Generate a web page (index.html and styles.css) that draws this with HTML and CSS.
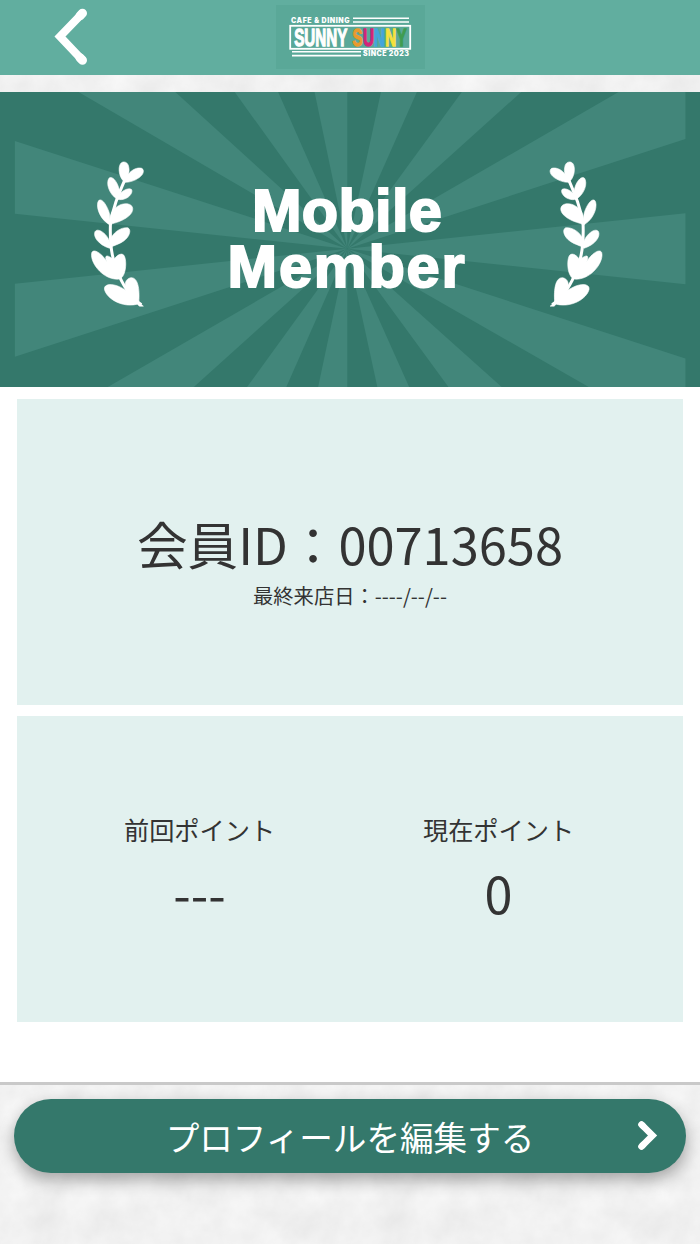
FILE: index.html
```
<!DOCTYPE html>
<html lang="ja">
<head>
  <meta charset="UTF-8">
  <meta name="viewport" content="width=device-width, initial-scale=1.0">
  <title>会員証 - SUNNY SUNNY</title>
  <link rel="stylesheet" href="styles.css">
</head>
<body>
  <header class="header">
    <a href="#" class="back-button" aria-label="戻る">
      <svg width="34" height="58" viewBox="0 0 34 58">
        <path d="M28.7 5 L6 28.5 L28.7 52.5" fill="none" stroke="#fff" stroke-width="8" stroke-linejoin="miter"/>
        <path d="M28.5 5.2 L26 7.8 M28.5 52.2 L26 49.7" stroke="#fff" stroke-width="9" stroke-linecap="round"/>
      </svg>
    </a>
    <svg class="logo" width="149" height="64" viewBox="0 0 149 64">
      <rect width="149" height="64" fill="#5aa898"/>
      <g fill="#fff" class="logo-small">
        <text x="15" y="17.6" textLength="58.5">CAFE &amp; DINING</text>
        <text x="87" y="51" textLength="46">SINCE 2023</text>
      </g>
      <path d="M77 13.2H133M77 17H133M16 46.8H85M16 50.6H85" stroke="#fff" stroke-width="1.6"/>
      <rect x="14.2" y="20.8" width="120" height="23" fill="none" stroke="#fff" stroke-width="1.8"/>
      <g class="logo-name" transform="translate(0 41) scale(1 1.58)">
        <text class="logo-white" x="18.2">SUNNY</text>
        <text class="logo-orange" x="76.5">S</text>
        <text class="logo-pink" x="86.9">U</text>
        <text class="logo-blue" x="98">N</text>
        <text class="logo-yellow" x="109.2">N</text>
        <text class="logo-green" x="120.5">Y</text>
      </g>
    </svg>
  </header>

  <section class="hero">
    <svg class="hero-rays" width="700" height="296" viewBox="0 91 700 296">
      <g fill="#42867a">
        <path d="M347.3 248 L14.3 140 V213Z"/>
        <path d="M347.3 248 L14.3 283 V356.3Z"/>
        <path d="M347.3 248 L78 91 H175Z"/>
        <path d="M347.3 248 L234.5 91 H278Z"/>
        <path d="M347.3 248 L314.5 91 H347.3Z"/>
        <path d="M347.3 248 L381 91 H417Z"/>
        <path d="M347.3 248 L462 91 H521.5Z"/>
        <path d="M347.3 248 L619 91 H686 V138Z"/>
        <path d="M347.3 248 L686 212.5 V283.5Z"/>
        <path d="M347.3 248 L686 358 V387 H590Z"/>
        <path d="M347.3 248 L502.5 387 H449Z"/>
        <path d="M347.3 248 L409.5 387 H377.5Z"/>
        <path d="M347.3 248 V387 H318Z"/>
        <path d="M347.3 248 L286 387 H246.5Z"/>
        <path d="M347.3 248 L193 387 H106.5Z"/>
      </g>
      <defs>
        <g id="laurel" fill="#fff" stroke="#fff" stroke-width=".6">
          <path d="M124 180 C118 194 112 208 110 224 C109.5 240 110 254 116 268 C121 282 128 295 141 304" fill="none" stroke-width="3"/>
          <path d="M124.5 181.5 C118.5 177 117.500 167 120 163 C122 160 126.5 160.5 128 164.5 C129 168 129 171 128 173.5 C131 169 137 166 141.5 167.5 C144.5 169.5 143 174 138.5 177 C134 180 129.5 181.5 124.5 181.5Z"/>
          <path d="M117 198.5 C108 193 105.5 182 108.5 177.5 C111 174.5 116 179.5 118 186 C119.5 190 119 193 118.5 194.5 C121 190 128 186.5 131 188.5 C133 191 129.5 196.5 124.5 198 C122 199 119.5 199 117 198.5Z"/>
          <path d="M109 224 C97.5 217 95 203 98.5 199.5 C102 197 107 206 108.5 211 C109.5 214 109.5 217 109.5 219 C109.5 208 120 202 127 203 C134 204 134 211 128 215.5 C122 220.5 116 221.5 109 224Z"/>
          <path d="M109 247.5 C98 244 92.5 236 94.5 231 C97 226.5 106 232 109.5 241 C111 232 121 226 127.5 227 C131.5 229 129 236.5 123 240.5 C118 244 113 244.5 109 247.5Z"/>
          <path d="M117 278.5 C101 278.5 88.5 260 91.5 251.5 C94 247.5 102 253.5 106.5 261 C104 256 105.5 254 109 256 C112 257.5 112 258 113 259.5 C116 255 120.5 251.5 123.5 254.5 C126 258 126 268 123.5 273.5 C122 277 120 278.5 117 278.5Z"/>
          <path d="M137 303.5 C122 307.5 106 298 104 288.5 C103.5 283 112 282.5 120 286.5 L126.5 290 C123 283 125.5 278 130.5 277 C137.5 276.5 139.5 288 138.5 301.5 L143 305.5 H139Z"/>
        </g>
      </defs>
      <use href="#laurel"/>
      <use href="#laurel" transform="translate(693.5 0) scale(-1 1)"/>
    </svg>
    <h1 class="hero-title">
      <span class="line-mobile">Mobile</span>
      <span class="line-member">Member</span>
    </h1>
  </section>

  <main class="content">
    <div class="card member-card">
      <p class="member-id">会員ID：00713658</p>
      <p class="last-visit">最終来店日：----/--/--</p>
    </div>
    <div class="card point-card">
      <div class="point-item">
        <span class="point-label">前回ポイント</span>
        <span class="point-value">---</span>
      </div>
      <div class="point-item">
        <span class="point-label">現在ポイント</span>
        <span class="point-value">0</span>
      </div>
    </div>
  </main>

  <footer class="footer">
    <a href="#" class="edit-button">
      <span>プロフィールを編集する</span>
      <svg class="edit-arrow" width="22" height="32" viewBox="0 0 22 32">
        <path d="M5.5 4.500 L16.500 15.500 L5.5 26.500" fill="none" stroke="#fff" stroke-width="6.6"/>
        <path d="M5.5 4.5 L7 6 M5.5 26.5 L7 25" stroke="#fff" stroke-width="6.6" stroke-linecap="round"/>
      </svg>
    </a>
  </footer>
</body>
</html>
```
FILE: styles.css
```
:root {
  --primary: #34786b;
  --header: #61ae9f;
  --card: #e2f1ef;
  --text: #333;
  --paper: #f1f1f1;
}

* {
  margin: 0;
  padding: 0;
  box-sizing: border-box;
}

body {
  min-height: 1244px;
  display: flex;
  flex-direction: column;
  color: var(--text);
  font-family: "Noto Sans CJK JP", sans-serif;
  background-color: var(--paper);
  /* rough paper grain */
  background-image: url("data:image/svg+xml,%3Csvg xmlns='http://www.w3.org/2000/svg' width='350' height='350'%3E%3Cfilter id='a' x='0' y='0' width='100%25' height='100%25' color-interpolation-filters='sRGB'%3E%3CfeTurbulence type='fractalNoise' baseFrequency='.03' numOctaves='6' stitchTiles='stitch'/%3E%3CfeColorMatrix values='.07 0 0 0 .91 .07 0 0 0 .91 .07 0 0 0 .91 0 0 0 0 1'/%3E%3C/filter%3E%3Crect width='350' height='350' filter='url(%23a)'/%3E%3C/svg%3E");
}

.header {
  height: 75px;
  margin-bottom: 16.5px;
  padding: 5px 54px 0;
  display: grid;
  grid-template-columns: 1fr 149px 1fr;
  align-items: start;
  background: var(--header);
}

.back-button {
  display: block;
  padding-top: 3px;
}

.back-button svg,
.logo {
  display: block;
}

.logo-small {
  font: 900 7px Inter, sans-serif;
}

.logo-name {
  font: bold 15.2px "Liberation Sans", sans-serif;
  stroke-width: 0.8;
}

.logo-white {
  fill: #fff;
  stroke: #fff;
}

.logo-orange {
  fill: #e99a2e;
  stroke: #e99a2e;
}

.logo-pink {
  fill: #d4237a;
  stroke: #d4237a;
}

.logo-blue {
  fill: #43a5dc;
  stroke: #43a5dc;
}

.logo-yellow {
  fill: #f6e13c;
  stroke: #f6e13c;
}

.logo-green {
  fill: #3f9c50;
  stroke: #3f9c50;
}

.hero {
  height: 295.5px;
  display: grid;
  background: var(--primary);
}

.hero-rays,
.hero-title {
  grid-area: 1 / 1;
}

.hero-rays {
  display: block;
  height: 295.5px;
}

.hero-title {
  display: flex;
  flex-direction: column;
  align-items: center;
  padding: 91px 6px 0 0;
  color: #fff;
  font: bold 59.5px/56px "Liberation Sans", Arial, sans-serif;
  -webkit-text-stroke: 2px #fff;
}

.line-mobile {
  letter-spacing: 0.3px;
}

.line-member {
  letter-spacing: 1.8px;
}

.content {
  height: 695px;
  padding: 11.5px 17px 0;
  display: flex;
  flex-direction: column;
  gap: 11.5px;
  background: #fff;
}

.card {
  height: 306px;
  background: var(--card);
}

.member-card {
  display: flex;
  flex-direction: column;
  align-items: center;
  justify-content: center;
  padding-top: 12px;
}

.member-id {
  font-size: 50.6px;
  line-height: 74px;
}

.last-visit {
  font-size: 20.3px;
  line-height: 30px;
}

.point-card {
  display: grid;
  grid-template-columns: 299px 299px;
  justify-content: center;
  align-content: center;
  padding: 10px 2px 0 0;
}

.point-item {
  display: flex;
  flex-direction: column;
  align-items: center;
}

.point-label {
  font-size: 25.2px;
  line-height: 38px;
}

.point-value {
  font-size: 50.4px;
  line-height: 90px;
}

.footer {
  border-top: 3.5px solid #c9c9c9;
  padding: 14px 14px 71px;
}

.edit-button {
  height: 74px;
  display: grid;
  grid-template-columns: 50px 1fr 50px;
  align-items: center;
  border-radius: 37px;
  background: var(--primary);
  box-shadow: 0 7px 16px rgba(0, 0, 0, 0.32);
  color: #fff;
  font-size: 33.6px;
  text-align: center;
  text-decoration: none;
}

.edit-button span {
  grid-column: 2;
}

.edit-arrow {
  display: block;
}
```
